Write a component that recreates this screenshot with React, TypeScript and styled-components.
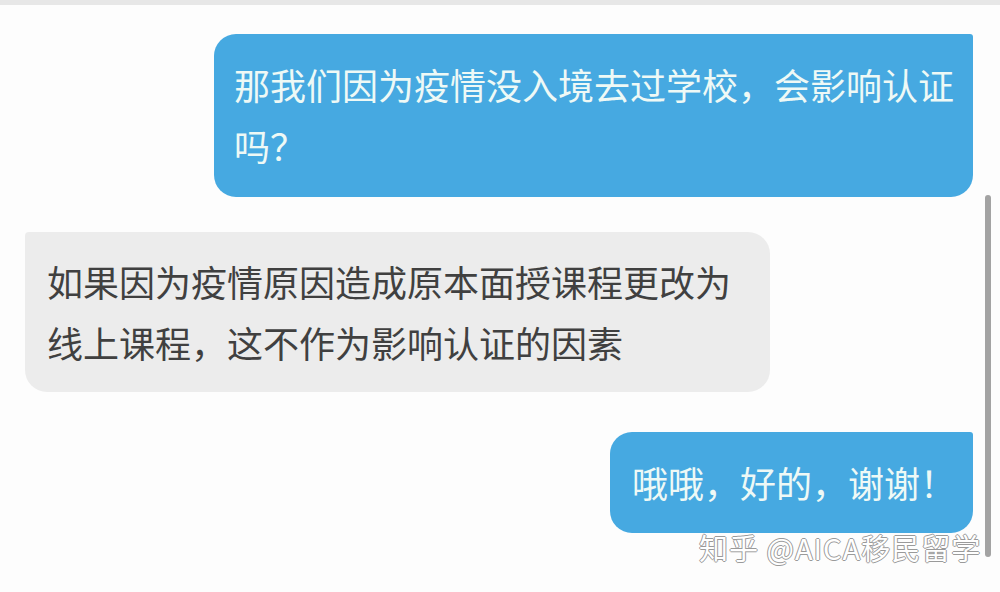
import React from 'react'
import styled, { createGlobalStyle } from 'styled-components'

const GlobalStyle = createGlobalStyle`
  html, body {
    margin: 0;
    padding: 0;
    background: #fdfdfd;
  }
  body {
    font-family: 'Noto Sans CJK SC', 'Noto Sans', sans-serif;
  }
`

const Screen = styled.div`
  position: relative;
  width: 1000px;
  height: 592px;
  overflow: hidden;
  background: #fdfdfd;
`

const TopStrip = styled.div`
  height: 5px;
  background: #e7e7e7;
`

const Thread = styled.div`
  display: flex;
  flex-direction: column;
  padding: 29px 27px 0 25px;
`

type BubbleProps = {
  $mine?: boolean
  $width: number
  $gap?: number
}

const Bubble = styled.div<BubbleProps>`
  align-self: ${(p) => (p.$mine ? 'flex-end' : 'flex-start')};
  box-sizing: border-box;
  width: ${(p) => p.$width}px;
  margin-top: ${(p) => p.$gap ?? 0}px;
  padding: ${(p) => (p.$mine ? '20px 12px 21px 20px' : '19px 30px 19px 22px')};
  background: ${(p) => (p.$mine ? '#46a9e1' : '#ececec')};
  color: ${(p) => (p.$mine ? '#eef9f6' : '#404040')};
  border-radius: ${(p) => (p.$mine ? '22px 3px 22px 22px' : '4px 22px 22px 22px')};
  font-size: 36px;
  line-height: 61px;
  word-break: break-all;
`

const ShortBubble = styled(Bubble)`
  padding: 20px 12px 20px 22px;
`

const Watermark = styled.div`
  position: absolute;
  left: 699px;
  top: 530px;
  font-size: 29px;
  line-height: 34px;
  color: #ffffff;
  letter-spacing: 1px;
  white-space: nowrap;
  text-shadow:
    1px 0 0 #9a9a9a,
    -1px 0 0 #9a9a9a,
    0 1px 0 #9a9a9a,
    0 -1px 0 #9a9a9a;
`

const ScrollThumb = styled.div`
  position: absolute;
  left: 985px;
  top: 195px;
  width: 6px;
  height: 362px;
  border-radius: 3px;
  background: #a3a3a3;
`

export default function App() {
  return (
    <>
      <GlobalStyle />
      <Screen>
        <TopStrip />
        <Thread>
          <Bubble $mine $width={759}>
            那我们因为疫情没入境去过学校，会影响认证吗？
          </Bubble>
          <Bubble $width={745} $gap={35}>
            如果因为疫情原因造成原本面授课程更改为线上课程，这不作为影响认证的因素
          </Bubble>
          <ShortBubble $mine $width={363} $gap={40}>
            哦哦，好的，谢谢！
          </ShortBubble>
        </Thread>
        <ScrollThumb />
        <Watermark>知乎 @AICA移民留学</Watermark>
      </Screen>
    </>
  )
}
